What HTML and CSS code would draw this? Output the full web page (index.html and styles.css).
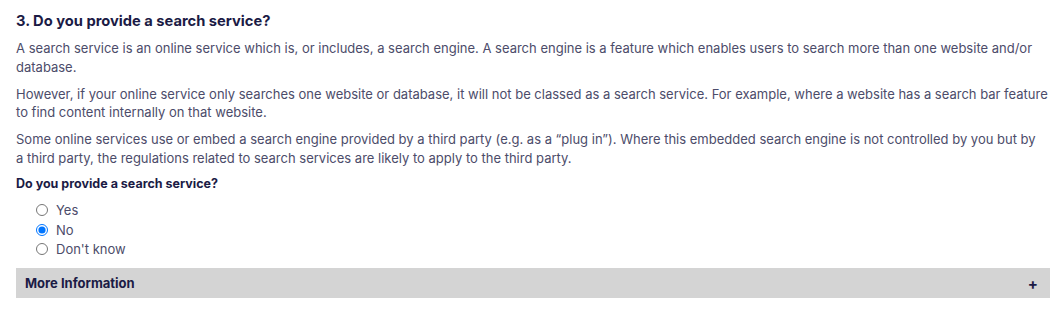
FILE: index.html
```html
<!DOCTYPE html>
<html lang="en">
<head>
    <meta charset="UTF-8">
    <title>Do you provide a search service?</title>
    <link rel="stylesheet" href="styles.css">
</head>
<body>
    <div class="question-block">
        <h3 class="question-title">3. Do you provide a search service?</h3>
        <p>A search service is an online service which is, or includes, a search engine. A search engine is a feature which enables users to search more than one website and/or database.</p>
        <p>However, if your online service only searches one website or database, it will not be classed as a search service. For example, where a website has a search bar feature to find content internally on that website.</p>
        <p>Some online services use or embed a search engine provided by a third party (e.g. as a “plug in”). Where this embedded search engine is not controlled by you but by a&nbsp;third party, the regulations related to search services are likely to apply to the third party.</p>
        <fieldset class="options">
            <legend>Do you provide a search service?</legend>
            <label class="option"><input type="radio" name="search" value="yes"> Yes</label>
            <label class="option"><input type="radio" name="search" value="no" checked> No</label>
            <label class="option"><input type="radio" name="search" value="dontknow"> Don't know</label>
        </fieldset>
        <div class="more-info">
            <span>More Information</span>
            <span class="plus">+</span>
        </div>
    </div>
</body>
</html>
```

FILE: styles.css
```css
body {
    margin: 0;
    padding: 0;
    background-color: #fff;
    font-family: Inter, "Noto Sans", sans-serif;
    color: #4c4c6a;
}
.question-block {
    padding: 12px 10px 0 16px;
}
.question-title {
    margin: 0 0 9px;
    font-size: 14.7px;
    font-weight: 700;
    color: #1b1b45;
}
.question-block p {
    margin: 0 0 8.5px;
    font-size: 13px;
    line-height: 18.5px;
}
.options {
    border: none;
    margin: 0;
    padding: 0;
}
.options legend {
    padding: 0;
    margin-top: 2px;
    margin-bottom: 10px;
    font-size: 12.5px;
    font-weight: 700;
    color: #1b1b45;
}
.option {
    display: flex;
    align-items: center;
    gap: 8px;
    padding-left: 20px;
    height: 19.5px;
    font-size: 13px;
    color: #4c4c6a;
}
.option input {
    margin: 0;
    width: 12px;
    height: 12px;
}
.more-info {
    display: flex;
    justify-content: space-between;
    align-items: center;
    margin-top: 9px;
    height: 30px;
    padding: 0 12px 0 9px;
    background-color: #d4d4d4;
    font-size: 13px;
    font-weight: 700;
    color: #1b1b45;
}
.more-info .plus {
    font-size: 15px;
}
```
